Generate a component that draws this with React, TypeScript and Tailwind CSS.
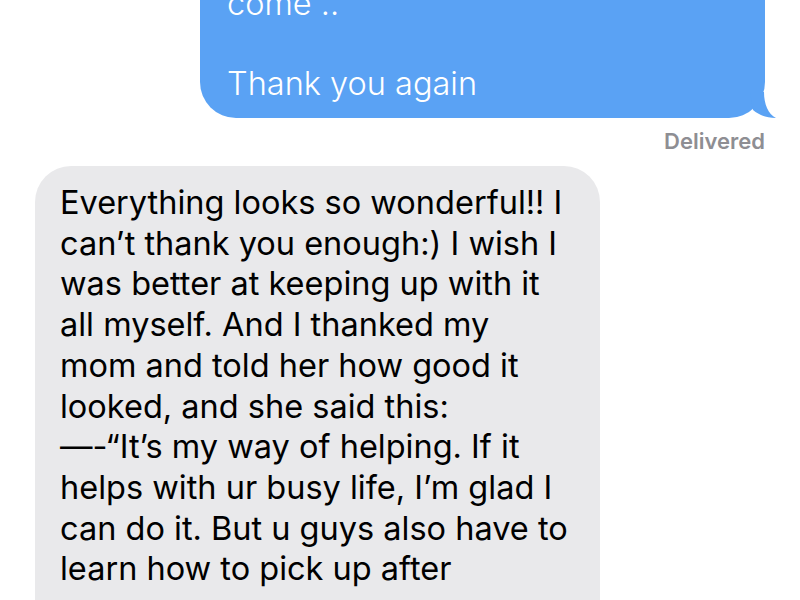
import React from 'react';

const grayLines = [
  'Everything looks so wonderful!! I',
  'can\u2019t thank you enough:) I wish I',
  'was better at keeping up with it',
  'all myself. And I thanked my',
  'mom and told her how good it',
  'looked, and she said this:',
  '\u2014-\u201cIt\u2019s my way of helping. If it',
  'helps with ur busy life, I\u2019m glad I',
  'can do it. But u guys also have to',
  'learn how to pick up after',
];

export default function App() {
  return (
    <div className="h-[600px] w-[800px] overflow-hidden bg-white font-['Inter',sans-serif]">
      {/* sent bubble, scrolled partly out of view */}
      <div className="mt-[-72px] flex justify-end pr-[35px]">
        <div className="relative w-[565px] rounded-b-[36px] bg-[#5aa2f4] pl-[27px] pr-6 pb-[14px] pt-14 text-[32.5px] font-light leading-[40px] text-white">
          <div>come ..</div>
          <div>&nbsp;</div>
          <div>Thank you again</div>
          <svg className="absolute bottom-0 right-[-11px]" width="26" height="26" viewBox="0 0 26 26">
            <path d="M0 0 H14 C14 12 18 22 26 26 C16 26 9 23 3 18 Z" fill="#5aa2f4" />
          </svg>
        </div>
      </div>
      <div className="mt-[9px] pr-[35px] text-right text-[22px] font-semibold leading-[28px] text-[#8e8e93]">Delivered</div>

      {/* received bubble */}
      <div className="mt-[11px] pl-[35px]">
        <div className="h-[460px] w-[565px] rounded-t-[36px] bg-[#e9e9eb] pl-[25px] pt-[17px] text-[32.5px] leading-[40.7px] text-black">
          {grayLines.map((l, i) => (
            <div key={i} className="whitespace-nowrap">{l}</div>
          ))}
        </div>
      </div>
    </div>
  );
}
